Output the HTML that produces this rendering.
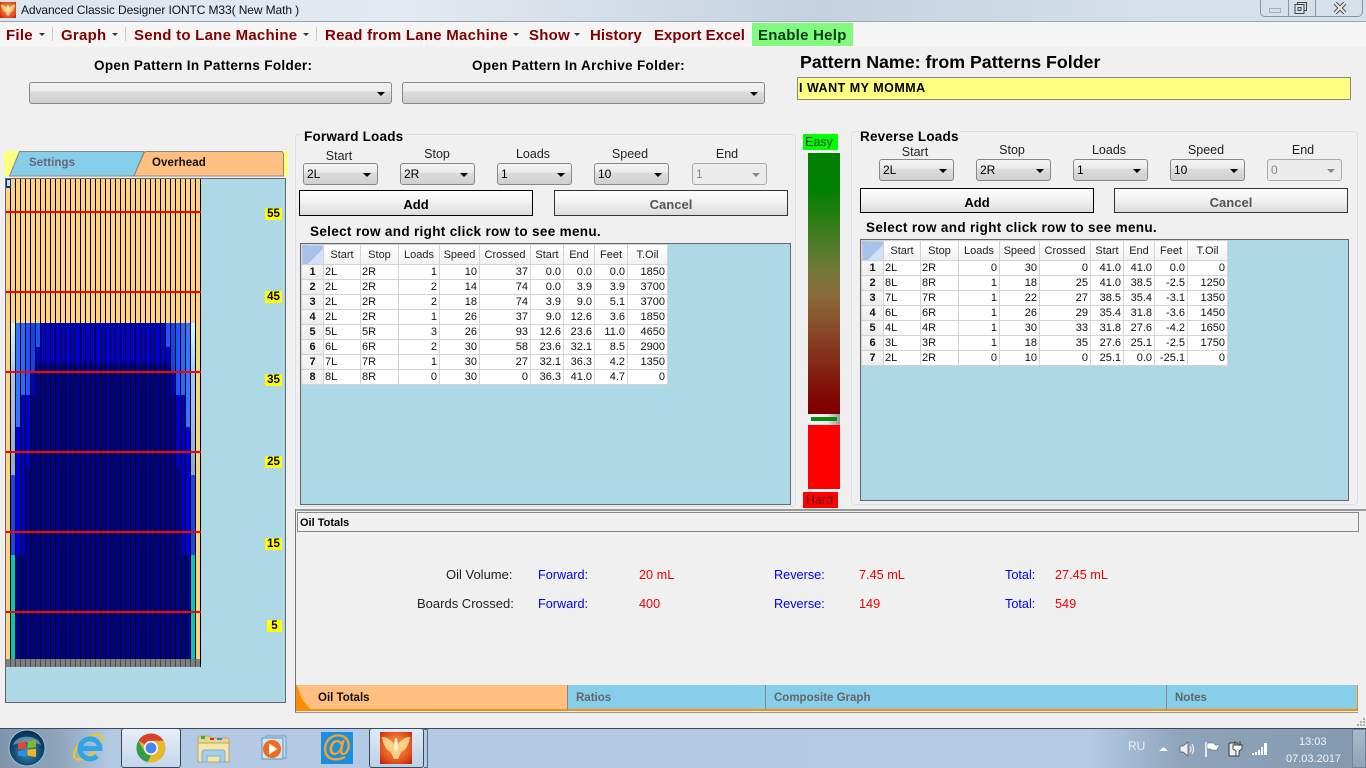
<!DOCTYPE html>
<html><head><meta charset="utf-8"><title>Advanced Classic Designer</title>
<style>
html,body{margin:0;padding:0;width:1366px;height:768px;overflow:hidden;background:#f0f0f0;font-family:"Liberation Sans",sans-serif;color:#000}
.a,.a *{box-sizing:border-box}
.a{position:absolute}
.t{position:absolute;white-space:nowrap}
.m{position:absolute;top:27px;font-size:15px;font-weight:bold;color:#800000;white-space:nowrap;line-height:17px;letter-spacing:.25px}
.ar{position:absolute;top:33px;width:0;height:0;border-left:3px solid transparent;border-right:3px solid transparent;border-top:3px solid #333}
.sep{position:absolute;top:27px;width:1px;height:14px;background:#ccc}
.cb{position:absolute;border:1px solid #888;border-radius:3px;background:linear-gradient(#f4f4f4 0,#ececec 40%,#dcdcdc 45%,#cfcfcf 100%);font-size:12px;line-height:20px;padding-left:3px}
.cb:after{content:"";position:absolute;right:6px;top:9px;border-left:4px solid transparent;border-right:4px solid transparent;border-top:4px solid #000}
.cb.d{background:#ececec;border-color:#aaa;color:#888}
.cb.d:after{border-top-color:#888}
.l{position:absolute;font-size:12.5px;color:#222;white-space:nowrap;transform:translateX(-50%)}
.b{position:absolute;border:1px solid #000;background:linear-gradient(#fdfdfd,#f2f2f2 45%,#dcdcdc);text-align:center;font-size:13px;font-weight:bold;line-height:27px}
.b.c{color:#555;border-color:#333}
.s{position:absolute;font-size:13.5px;font-weight:bold;white-space:nowrap;letter-spacing:.33px}
.g{position:absolute;background:#add8e6;border:1px solid #666}
table{border-collapse:collapse;table-layout:fixed;position:absolute;left:0;top:0;font-size:11px;background:#fff;width:366px}
td,th{border:1px solid #d4d4d4;padding:0 2px;height:15px;line-height:14px;text-align:right;font-weight:normal;overflow:hidden;white-space:nowrap;color:#111}
th{height:20px;background:linear-gradient(#fff,#f1f1f1);text-align:center;color:#222;padding:0}
th.c{background:linear-gradient(135deg,#a7c3ea 60%,#d0e0f5 60%)}
td.h{background:linear-gradient(#f8f8f8,#ececec);font-weight:bold;text-align:center}
td.x{text-align:left;padding-left:1px}
.gb{position:absolute;border:1px solid #d9dfe8;border-radius:4px}
.gt{position:absolute;font-size:13.5px;font-weight:bold;background:#f0f0f0;padding:0 1px;letter-spacing:.2px;line-height:14px}
.rl{position:absolute;left:6px;width:195px;height:2px;background:#f00}
.y{position:absolute;left:265px;width:17px;height:12px;background:#ff0;font-size:11.5px;font-weight:bold;text-align:center;line-height:13px}
.v{position:absolute;font-size:12.7px;white-space:nowrap;line-height:14px}
.bl{color:#0000ee}.re{color:#ee0000}.dk{color:#222;font-size:13px}
.tb{position:absolute;top:685px;height:26px;background:#87ceeb;border-left:1px solid #888;border-bottom:2px solid #ff8c00;font-size:11.5px;font-weight:bold;color:#666;line-height:27px}
</style></head><body>
<div class="a" style="left:0;top:0;width:1366px;height:768px">

<!-- title bar -->
<div class="a" style="left:0;top:0;width:1366px;height:22px;background:linear-gradient(90deg,#dbe6f0,#e3e9f0 30%,#c4d2e0 60%,#d5e0ea 85%,#d6e0ea);border-bottom:1px solid #9aa5b0"></div>
<svg class="a" style="left:0;top:2px" width="16" height="16" viewBox="0 0 32 32"><defs><radialGradient id="ph1" cx=".5" cy=".45" r=".7"><stop offset="0" stop-color="#f7a94a"/><stop offset=".7" stop-color="#e0501c"/><stop offset="1" stop-color="#c41f12"/></radialGradient></defs><rect width="32" height="32" fill="url(#ph1)"/><path d="M14 12C10 7 6 5 2 5c1 7 4 13 9 15l3 7h4l3-7c5-2 8-8 9-15-4 0-8 2-12 7l-2-6z" fill="#fbcf87"/><path d="M15 6h2l1 10-2 4-2-4z" fill="#fff0cf"/></svg>
<div class="t" style="left:21px;top:3px;font-size:12px;letter-spacing:-.1px;line-height:15px;color:#111">Advanced Classic Designer IONTC M33( New Math )</div>
<div class="a" style="left:1260px;top:-1px;width:103px;height:18px;border:1px solid #8a95a3;border-radius:0 0 5px 5px"></div>
<div class="a" style="left:1288px;top:0;width:1px;height:17px;background:#8a95a3"></div>
<div class="a" style="left:1315px;top:0;width:1px;height:17px;background:#8a95a3"></div>
<div class="a" style="left:1269px;top:8px;width:12px;height:5px;border:1px solid #a5afb9;background:#d5dde5"></div>
<svg class="a" style="left:1294px;top:2px" width="14" height="12"><rect x="3.5" y=".5" width="9" height="8" fill="none" stroke="#444"/><rect x="1" y="2.5" width="9" height="9" fill="#d8e0e8" stroke="#444"/><rect x="4" y="5.5" width="3" height="3" fill="none" stroke="#444"/></svg>
<svg class="a" style="left:1333px;top:2px" width="14" height="12"><path d="M2 1l10 10M12 1L2 11" stroke="#444" stroke-width="4"/><path d="M2 1l10 10M12 1L2 11" stroke="#eee" stroke-width="2"/></svg>

<!-- menu -->
<div class="a" style="left:0;top:22px;width:1366px;height:25px;background:#f5f5f5"></div>
<div class="m" style="left:6px">File</div><div class="ar" style="left:39px"></div><div class="sep" style="left:52px"></div>
<div class="m" style="left:61px">Graph</div><div class="ar" style="left:112px"></div><div class="sep" style="left:125px"></div>
<div class="m" style="left:134px">Send to Lane Machine</div><div class="ar" style="left:303px"></div><div class="sep" style="left:316px"></div>
<div class="m" style="left:325px">Read from Lane Machine</div><div class="ar" style="left:513px"></div>
<div class="m" style="left:529px">Show</div><div class="ar" style="left:574px"></div>
<div class="m" style="left:590px;letter-spacing:0">History</div>
<div class="m" style="left:654px;letter-spacing:0">Export Excel</div>
<div class="a" style="left:752px;top:23px;width:101px;height:23px;background:#80fb80"></div>
<div class="m" style="left:758px;color:#043a14;">Enable Help</div>

<!-- open pattern -->
<div class="s" style="left:94px;top:58px">Open Pattern In Patterns Folder:</div>
<div class="s" style="left:472px;top:58px">Open Pattern In Archive Folder:</div>
<div class="cb" style="left:29px;top:82px;width:363px;height:22px"></div>
<div class="cb" style="left:402px;top:82px;width:363px;height:22px"></div>
<div class="t" style="left:800px;top:53px;font-size:17.8px;font-weight:bold;line-height:19px">Pattern Name: from Patterns Folder</div>
<div class="a" style="left:797px;top:77px;width:554px;height:23px;background:#ffff80;border:1px solid #888;font-size:12.5px;letter-spacing:.5px;font-weight:bold;line-height:20px;padding-left:1px">I WANT MY MOMMA</div>

<!-- left tabs -->
<svg class="a" style="left:4px;top:151px" width="285" height="26"><rect width="284" height="25" fill="#ffff80"/><path d="M5.5 25L15.5 .5H140L130 25z" fill="#87ceeb" stroke="#888"/><path d="M130 25L140 2l2-1.5H278l1.5 2V25z" fill="#ffbf80" stroke="#888"/></svg>
<div class="t" style="left:29px;top:157px;font-size:11.5px;font-weight:bold;color:#667;letter-spacing:.1px">Settings</div>
<div class="t" style="left:152px;top:157px;font-size:11.5px;font-weight:bold;color:#111;letter-spacing:.1px">Overhead</div>

<!-- lane -->
<div class="a" style="left:5px;top:178px;width:281px;height:525px;background:#add8e6;border:1px solid #666"></div>
<div class="a" style="left:6px;top:179px;width:195px;height:480px;background:#ffd27f"></div>
<div class="a" style="left:6px;top:659px;width:195px;height:8px;background:#808080"></div>
<div class="a" style="left:41px;top:323px;width:125px;height:336px;background:linear-gradient(#0000cc 0,#0000cc 40px,#00008b 40px)"></div>

<div class="a" style="left:11px;top:323px;width:5px;height:336px;background:linear-gradient(#ccffff 0,#a0c8ff 50px,#88aadd 152px,#1a44ee 152px,#1a44ee 232px,#00c8c0 232px)"></div>
<div class="a" style="left:191px;top:323px;width:5px;height:336px;background:linear-gradient(#ccffff 0,#a0c8ff 50px,#88aadd 152px,#1a44ee 152px,#1a44ee 232px,#00c8c0 232px)"></div>
<div class="a" style="left:16px;top:323px;width:5px;height:336px;background:linear-gradient(#3377ff 0,#3377ff 104px,#0000dd 104px,#0000dd 232px,#00008b 232px)"></div>
<div class="a" style="left:186px;top:323px;width:5px;height:336px;background:linear-gradient(#3377ff 0,#3377ff 104px,#0000dd 104px,#0000dd 232px,#00008b 232px)"></div>
<div class="a" style="left:21px;top:323px;width:5px;height:336px;background:linear-gradient(#2a66ff 0,#2a66ff 72px,#0000cc 72px,#0000cc 232px,#00008b 232px)"></div>
<div class="a" style="left:181px;top:323px;width:5px;height:336px;background:linear-gradient(#2a66ff 0,#2a66ff 72px,#0000cc 72px,#0000cc 232px,#00008b 232px)"></div>
<div class="a" style="left:26px;top:323px;width:5px;height:336px;background:linear-gradient(#1a55ff 0,#1a55ff 72px,#0000cc 72px,#0000cc 144px,#00008b 144px)"></div>
<div class="a" style="left:176px;top:323px;width:5px;height:336px;background:linear-gradient(#1a55ff 0,#1a55ff 72px,#0000cc 72px,#0000cc 144px,#00008b 144px)"></div>
<div class="a" style="left:31px;top:323px;width:5px;height:336px;background:linear-gradient(#1144ee 0,#1144ee 50px,#0000cc 50px,#0000cc 72px,#00008b 72px)"></div>
<div class="a" style="left:171px;top:323px;width:5px;height:336px;background:linear-gradient(#1144ee 0,#1144ee 50px,#0000cc 50px,#0000cc 72px,#00008b 72px)"></div>
<div class="a" style="left:36px;top:323px;width:5px;height:336px;background:linear-gradient(#1a55ff 0,#1a55ff 24px,#0000cc 24px,#0000cc 40px,#00008b 40px)"></div>
<div class="a" style="left:166px;top:323px;width:5px;height:336px;background:linear-gradient(#1a55ff 0,#1a55ff 24px,#0000cc 24px,#0000cc 40px,#00008b 40px)"></div>

<div class="a" style="left:10px;top:179px;width:186px;height:480px;background:repeating-linear-gradient(90deg,#000 0,#000 1px,transparent 1px,transparent 5px)"></div>
<div class="a" style="left:10px;top:659px;width:186px;height:8px;background:repeating-linear-gradient(90deg,#4a4a4a 0,#4a4a4a 1px,transparent 1px,transparent 5px)"></div>
<div class="a" style="left:200px;top:179px;width:1px;height:488px;background:#000"></div>
<div class="a" style="left:6px;top:179px;width:5px;height:9px;background:#003399"></div>
<div class="a" style="left:7px;top:180px;width:3px;height:6px;background:#cde"></div>
<div class="rl" style="top:211px"></div><div class="rl" style="top:291px"></div><div class="rl" style="top:371px"></div><div class="rl" style="top:451px"></div><div class="rl" style="top:531px"></div><div class="rl" style="top:611px"></div>
<div class="y" style="top:208px">55</div><div class="y" style="top:291px">45</div><div class="y" style="top:374px">35</div><div class="y" style="top:456px">25</div><div class="y" style="top:538px">15</div>
<div class="y" style="top:620px;left:267px;width:15px">5</div>

<!-- forward -->
<div class="gb" style="left:295px;top:134px;width:501px;height:373px"></div>
<div class="gt" style="left:303px;top:130px">Forward Loads</div>
<div class="l" style="left:339px;top:149px">Start</div><div class="l" style="left:437px;top:147px">Stop</div><div class="l" style="left:533px;top:147px">Loads</div><div class="l" style="left:630px;top:147px">Speed</div><div class="l" style="left:727px;top:147px">End</div>
<div class="cb" style="left:303px;top:163px;width:75px;height:22px">2L</div>
<div class="cb" style="left:400px;top:163px;width:75px;height:22px">2R</div>
<div class="cb" style="left:497px;top:163px;width:75px;height:22px">1</div>
<div class="cb" style="left:594px;top:163px;width:75px;height:22px">10</div>
<div class="cb d" style="left:692px;top:163px;width:75px;height:22px">1</div>
<div class="b" style="left:299px;top:190px;width:234px;height:26px">Add</div>
<div class="b c" style="left:554px;top:190px;width:234px;height:26px">Cancel</div>
<div class="s" style="left:310px;top:224px">Select row and right click row to see menu.</div>
<div class="g" style="left:300px;top:243px;width:491px;height:262px">
<table><colgroup><col style="width:22px"><col style="width:37px"><col style="width:38px"><col style="width:41px"><col style="width:40px"><col style="width:51px"><col style="width:33px"><col style="width:31px"><col style="width:33px"><col style="width:40px"></colgroup>
<tr><th class="c"></th><th>Start</th><th>Stop</th><th>Loads</th><th>Speed</th><th>Crossed</th><th>Start</th><th>End</th><th>Feet</th><th>T.Oil</th></tr>
<tr><td class="h">1</td><td class="x">2L</td><td class="x">2R</td><td>1</td><td>10</td><td>37</td><td>0.0</td><td>0.0</td><td>0.0</td><td>1850</td></tr>
<tr><td class="h">2</td><td class="x">2L</td><td class="x">2R</td><td>2</td><td>14</td><td>74</td><td>0.0</td><td>3.9</td><td>3.9</td><td>3700</td></tr>
<tr><td class="h">3</td><td class="x">2L</td><td class="x">2R</td><td>2</td><td>18</td><td>74</td><td>3.9</td><td>9.0</td><td>5.1</td><td>3700</td></tr>
<tr><td class="h">4</td><td class="x">2L</td><td class="x">2R</td><td>1</td><td>26</td><td>37</td><td>9.0</td><td>12.6</td><td>3.6</td><td>1850</td></tr>
<tr><td class="h">5</td><td class="x">5L</td><td class="x">5R</td><td>3</td><td>26</td><td>93</td><td>12.6</td><td>23.6</td><td>11.0</td><td>4650</td></tr>
<tr><td class="h">6</td><td class="x">6L</td><td class="x">6R</td><td>2</td><td>30</td><td>58</td><td>23.6</td><td>32.1</td><td>8.5</td><td>2900</td></tr>
<tr><td class="h">7</td><td class="x">7L</td><td class="x">7R</td><td>1</td><td>30</td><td>27</td><td>32.1</td><td>36.3</td><td>4.2</td><td>1350</td></tr>
<tr><td class="h">8</td><td class="x">8L</td><td class="x">8R</td><td>0</td><td>30</td><td>0</td><td>36.3</td><td>41.0</td><td>4.7</td><td>0</td></tr>
</table></div>

<!-- difficulty bar -->
<div class="a" style="left:803px;top:134px;width:35px;height:16px;background:#00ff00;font-size:12.5px;line-height:16px;padding-left:2px;color:#0a3a0a">Easy</div>
<div class="a" style="left:808px;top:153px;width:32px;height:261px;background:linear-gradient(#008000 0,#008000 14%,#6f7a38 44%,#8a6a3a 55%,#800000 97%)"></div>
<div class="a" style="left:808px;top:414px;width:32px;height:11px;background:linear-gradient(90deg,#f5f5f5,#e8e8e8 60%,#999)"></div>
<div class="a" style="left:811px;top:417px;width:26px;height:4px;background:#0a8a0a"></div>
<div class="a" style="left:808px;top:425px;width:32px;height:64px;background:#f00"></div>
<div class="a" style="left:803px;top:492px;width:35px;height:16px;background:#f00;font-size:12.5px;line-height:17px;padding-left:3px;color:#600">Hard</div>

<!-- reverse -->
<div class="gb" style="left:851px;top:131px;width:507px;height:374px"></div>
<div class="gt" style="left:859px;top:130px">Reverse Loads</div>
<div class="l" style="left:915px;top:145px">Start</div><div class="l" style="left:1012px;top:143px">Stop</div><div class="l" style="left:1109px;top:143px">Loads</div><div class="l" style="left:1206px;top:143px">Speed</div><div class="l" style="left:1303px;top:143px">End</div>
<div class="cb" style="left:879px;top:159px;width:75px;height:22px">2L</div>
<div class="cb" style="left:976px;top:159px;width:75px;height:22px">2R</div>
<div class="cb" style="left:1073px;top:159px;width:75px;height:22px">1</div>
<div class="cb" style="left:1170px;top:159px;width:75px;height:22px">10</div>
<div class="cb d" style="left:1267px;top:159px;width:75px;height:22px">0</div>
<div class="b" style="left:860px;top:188px;width:234px;height:25px">Add</div>
<div class="b c" style="left:1114px;top:188px;width:234px;height:25px">Cancel</div>
<div class="s" style="left:866px;top:220px">Select row and right click row to see menu.</div>
<div class="g" style="left:860px;top:239px;width:489px;height:262px">
<table><colgroup><col style="width:22px"><col style="width:37px"><col style="width:38px"><col style="width:41px"><col style="width:40px"><col style="width:51px"><col style="width:33px"><col style="width:31px"><col style="width:33px"><col style="width:40px"></colgroup>
<tr><th class="c"></th><th>Start</th><th>Stop</th><th>Loads</th><th>Speed</th><th>Crossed</th><th>Start</th><th>End</th><th>Feet</th><th>T.Oil</th></tr>
<tr><td class="h">1</td><td class="x">2L</td><td class="x">2R</td><td>0</td><td>30</td><td>0</td><td>41.0</td><td>41.0</td><td>0.0</td><td>0</td></tr>
<tr><td class="h">2</td><td class="x">8L</td><td class="x">8R</td><td>1</td><td>18</td><td>25</td><td>41.0</td><td>38.5</td><td>-2.5</td><td>1250</td></tr>
<tr><td class="h">3</td><td class="x">7L</td><td class="x">7R</td><td>1</td><td>22</td><td>27</td><td>38.5</td><td>35.4</td><td>-3.1</td><td>1350</td></tr>
<tr><td class="h">4</td><td class="x">6L</td><td class="x">6R</td><td>1</td><td>26</td><td>29</td><td>35.4</td><td>31.8</td><td>-3.6</td><td>1450</td></tr>
<tr><td class="h">5</td><td class="x">4L</td><td class="x">4R</td><td>1</td><td>30</td><td>33</td><td>31.8</td><td>27.6</td><td>-4.2</td><td>1650</td></tr>
<tr><td class="h">6</td><td class="x">3L</td><td class="x">3R</td><td>1</td><td>18</td><td>35</td><td>27.6</td><td>25.1</td><td>-2.5</td><td>1750</td></tr>
<tr><td class="h">7</td><td class="x">2L</td><td class="x">2R</td><td>0</td><td>10</td><td>0</td><td>25.1</td><td>0.0</td><td>-25.1</td><td>0</td></tr>
</table></div>

<!-- bottom panel -->
<div class="a" style="left:295px;top:509px;width:1071px;height:2px;background:#999"></div>
<div class="a" style="left:295px;top:509px;width:1px;height:204px;background:#777"></div>
<div class="a" style="left:295px;top:712px;width:1063px;height:1px;background:#999"></div>
<div class="a" style="left:297px;top:512px;width:1062px;height:20px;border:1px solid #888;font-size:11px;font-weight:bold;line-height:20px;padding-left:2px">Oil Totals</div>
<div class="v dk" style="left:446px;top:568px">Oil Volume:</div>
<div class="v bl" style="left:538px;top:568px">Forward:</div><div class="v re" style="left:639px;top:568px">20 mL</div>
<div class="v bl" style="left:774px;top:568px">Reverse:</div><div class="v re" style="left:859px;top:568px">7.45 mL</div>
<div class="v bl" style="left:1005px;top:568px">Total:</div><div class="v re" style="left:1055px;top:568px">27.45 mL</div>
<div class="v dk" style="left:417px;top:597px">Boards Crossed:</div>
<div class="v bl" style="left:538px;top:597px">Forward:</div><div class="v re" style="left:639px;top:597px">400</div>
<div class="v bl" style="left:774px;top:597px">Reverse:</div><div class="v re" style="left:859px;top:597px">149</div>
<div class="v bl" style="left:1005px;top:597px">Total:</div><div class="v re" style="left:1055px;top:597px">549</div>

<div class="tb" style="left:296px;width:271px;background:#ffbf80;color:#111;padding-left:22px;border-left:0">Oil Totals</div>
<svg class="a" style="left:296px;top:685px" width="18" height="26"><path d="M0 0h1l5 14 8 10H0z" fill="#ff8c00"/></svg>
<div class="tb" style="left:567px;width:198px;padding-left:8px">Ratios</div>
<div class="tb" style="left:765px;width:401px;padding-left:8px">Composite Graph</div>
<div class="tb" style="left:1166px;width:192px;padding-left:8px;border-right:1px solid #ff8c00">Notes</div>
<svg class="a" style="left:1357px;top:717px" width="9" height="9"><g fill="#aaa"><rect x="6" y="1" width="2" height="2"/><rect x="3" y="4" width="2" height="2"/><rect x="6" y="4" width="2" height="2"/><rect x="0" y="7" width="2" height="2"/><rect x="3" y="7" width="2" height="2"/><rect x="6" y="7" width="2" height="2"/></g></svg>

<!-- taskbar -->
<div class="a" style="left:0;top:728px;width:1366px;height:40px;background:linear-gradient(90deg,#7f95ac 0,#8fa5bb 60px,#b4cae4 110px,#b5cbe5 1090px,#8ea4bb 1180px,#8399ae 1366px);border-top:1px solid #3a4a5a"></div>
<div class="a" style="left:121px;top:728px;width:60px;height:40px;border:1px solid #3a4a5a;border-radius:3px;background:linear-gradient(#e6eef8,#c4d6ec)"></div>
<div class="a" style="left:369px;top:728px;width:55px;height:40px;border:1px solid #3a4a5a;border-radius:3px;background:linear-gradient(#e0eaf6,#bcd0e8)"></div>
<div class="a" style="left:424px;top:729px;width:4px;height:39px;border:1px solid #5a6a7a;border-left:0"></div>

<svg class="a" style="left:8px;top:729px" width="38" height="38" viewBox="0 0 38 38"><defs><radialGradient id="orb" cx=".5" cy=".6" r=".6"><stop offset="0" stop-color="#3a8fc0"/><stop offset=".75" stop-color="#0d3f66"/><stop offset="1" stop-color="#082a48"/></radialGradient></defs><circle cx="19" cy="19" r="18" fill="url(#orb)" stroke="#9fc0d8"/><path d="M5 16C8 5 30 5 33 16 24 12 14 12 5 16z" fill="#9ec4dc" opacity=".55"/><path d="M10 14l8-1.500v7l-8 1z" fill="#e8452c"/><path d="M19.500 12.300l8.500-1.500v7.500l-8.500 1z" fill="#7cbb2e"/><path d="M10 22l8-1v7l-8-1.500z" fill="#2f8fe0"/><path d="M19.500 20.800l8.500-1V28l-8.500-1.500z" fill="#f5b81c"/></svg>

<svg class="a" style="left:73px;top:731px" width="32" height="32" viewBox="0 0 32 32"><ellipse cx="15" cy="16" rx="17" ry="8" transform="rotate(-40 15 16)" fill="none" stroke="#f5c51f" stroke-width="2.200"/><path d="M7.500 17.500h19.500a10 10 0 1 0-3 7.500" fill="none" stroke="#2fa4e7" stroke-width="5"/></svg>

<svg class="a" style="left:136px;top:733px" width="30" height="30" viewBox="0 0 30 30"><circle cx="15" cy="15" r="14.500" fill="#e8b82c"/><path d="M15 .5a14.500 14.500 0 0 1 12.560 7.250H15a7.250 7.250 0 0 0-6.300 3.650L2.400 7.750A14.500 14.500 0 0 1 15 .5z" fill="#d8412f"/><path d="M2.400 7.750l6.300 10.900a7.250 7.250 0 0 0 6.300 3.600l-3.500 6.900A14.500 14.500 0 0 1 2.400 7.750z" fill="#2f9e46"/><circle cx="15" cy="15" r="7" fill="#fff"/><circle cx="15" cy="15" r="5.500" fill="#4a86ee"/></svg>

<svg class="a" style="left:197px;top:735px" width="33" height="28" viewBox="0 0 33 28"><path d="M1 3q0-2 2-2h9l2 2h16q2 0 2 2v4H1z" fill="#ecd48c" stroke="#c0a366"/><rect x="4" y="1" width="4" height="3" fill="#2fb24a"/><rect x="13" y="3" width="4" height="2" fill="#c8392b"/><rect x="20" y="3" width="5" height="2" fill="#2b8ad8"/><path d="M1 8h31v18q0 1-1 1H2q-1 0-1-1z" fill="#f7e5a8" stroke="#c0a366"/><path d="M5 27v-9q0-3 3-3h17q3 0 3 3v9h-5v-6H10v6z" fill="#a4cfe8" stroke="#7fb0cf"/></svg>

<svg class="a" style="left:261px;top:735px" width="30" height="28" viewBox="0 0 30 28"><rect x="5" y="1" width="20" height="22" fill="#c5dcee" stroke="#6a9cc0"/><rect x="1" y="3" width="21" height="21" fill="#cfe3f2" stroke="#5f92b8"/><circle cx="11" cy="14" r="9" fill="#f26a1b"/><path d="M8 8.500l8.500 5.500-8.500 5.500z" fill="#fff"/></svg>

<div class="a" style="left:321px;top:732px;width:32px;height:32px;background:#1a8fe0;color:#f9a02e;font-size:30px;line-height:30px;text-align:center;-webkit-text-stroke:.4px #f9a02e">@</div>

<svg class="a" style="left:380px;top:732px" width="32" height="32" viewBox="0 0 32 32"><defs><radialGradient id="ph2" cx=".5" cy=".45" r=".7"><stop offset="0" stop-color="#f7a94a"/><stop offset=".7" stop-color="#e0501c"/><stop offset="1" stop-color="#c41f12"/></radialGradient></defs><rect width="32" height="32" fill="url(#ph2)"/><path d="M14 12C10 7 6 5 2 5c1 7 4 13 9 15l3 7h4l3-7c5-2 8-8 9-15-4 0-8 2-12 7l-2-6z" fill="#fbcf87"/><path d="M15 6h2l1 10-2 4-2-4z" fill="#fff0cf"/></svg>

<div class="t" style="left:1128px;top:739px;font-size:12px;color:#e8eef5;line-height:14px">RU</div>
<svg class="a" style="left:1158px;top:746px" width="11" height="6"><path d="M1 5l4.500-4L10 5z" fill="#fff"/></svg>
<svg class="a" style="left:1179px;top:741px" width="18" height="16" viewBox="0 0 18 16"><path d="M1 5h3l5-4v14l-5-4H1z" fill="#eee" stroke="#555" stroke-width=".7"/><path d="M11 5q2 3 0 6M13 3q3 5 0 10" fill="none" stroke="#eee" stroke-width="1.200"/></svg>
<svg class="a" style="left:1204px;top:741px" width="17" height="17" viewBox="0 0 17 17"><path d="M2 1v15" stroke="#fff" stroke-width="1.600"/><path d="M3 2h7l1 2h5l-3 4 1 1H8l-1-1H3z" fill="#fff" stroke="#555" stroke-width=".5"/></svg>
<svg class="a" style="left:1228px;top:740px" width="16" height="17" viewBox="0 0 16 17"><rect x="1" y="3" width="9" height="13" rx="1" fill="#eee" stroke="#333"/><path d="M7 1v4M12 1v4M5 5h9v4l-3 2v5H8v-5L5 9z" fill="#fff" stroke="#333" stroke-width=".9"/></svg>
<svg class="a" style="left:1252px;top:742px" width="17" height="14"><g fill="#fff"><rect x="0" y="11" width="2" height="2"/><rect x="3" y="10" width="2" height="3"/><rect x="6" y="8" width="2" height="5"/><rect x="9" y="5" width="2" height="8"/><rect x="12" y="1" width="3" height="12"/></g></svg>
<div class="t" style="left:1299px;top:735px;font-size:11px;color:#f0f4f8;line-height:14px">13:03</div>
<div class="t" style="left:1286px;top:752px;font-size:11px;color:#f0f4f8;line-height:14px">07.03.2017</div>
<div class="a" style="left:1352px;top:729px;width:14px;height:39px;border:1px solid #6f8499;background:linear-gradient(#a9bbcd,#8fa5ba)"></div>
</div>
</body></html>
